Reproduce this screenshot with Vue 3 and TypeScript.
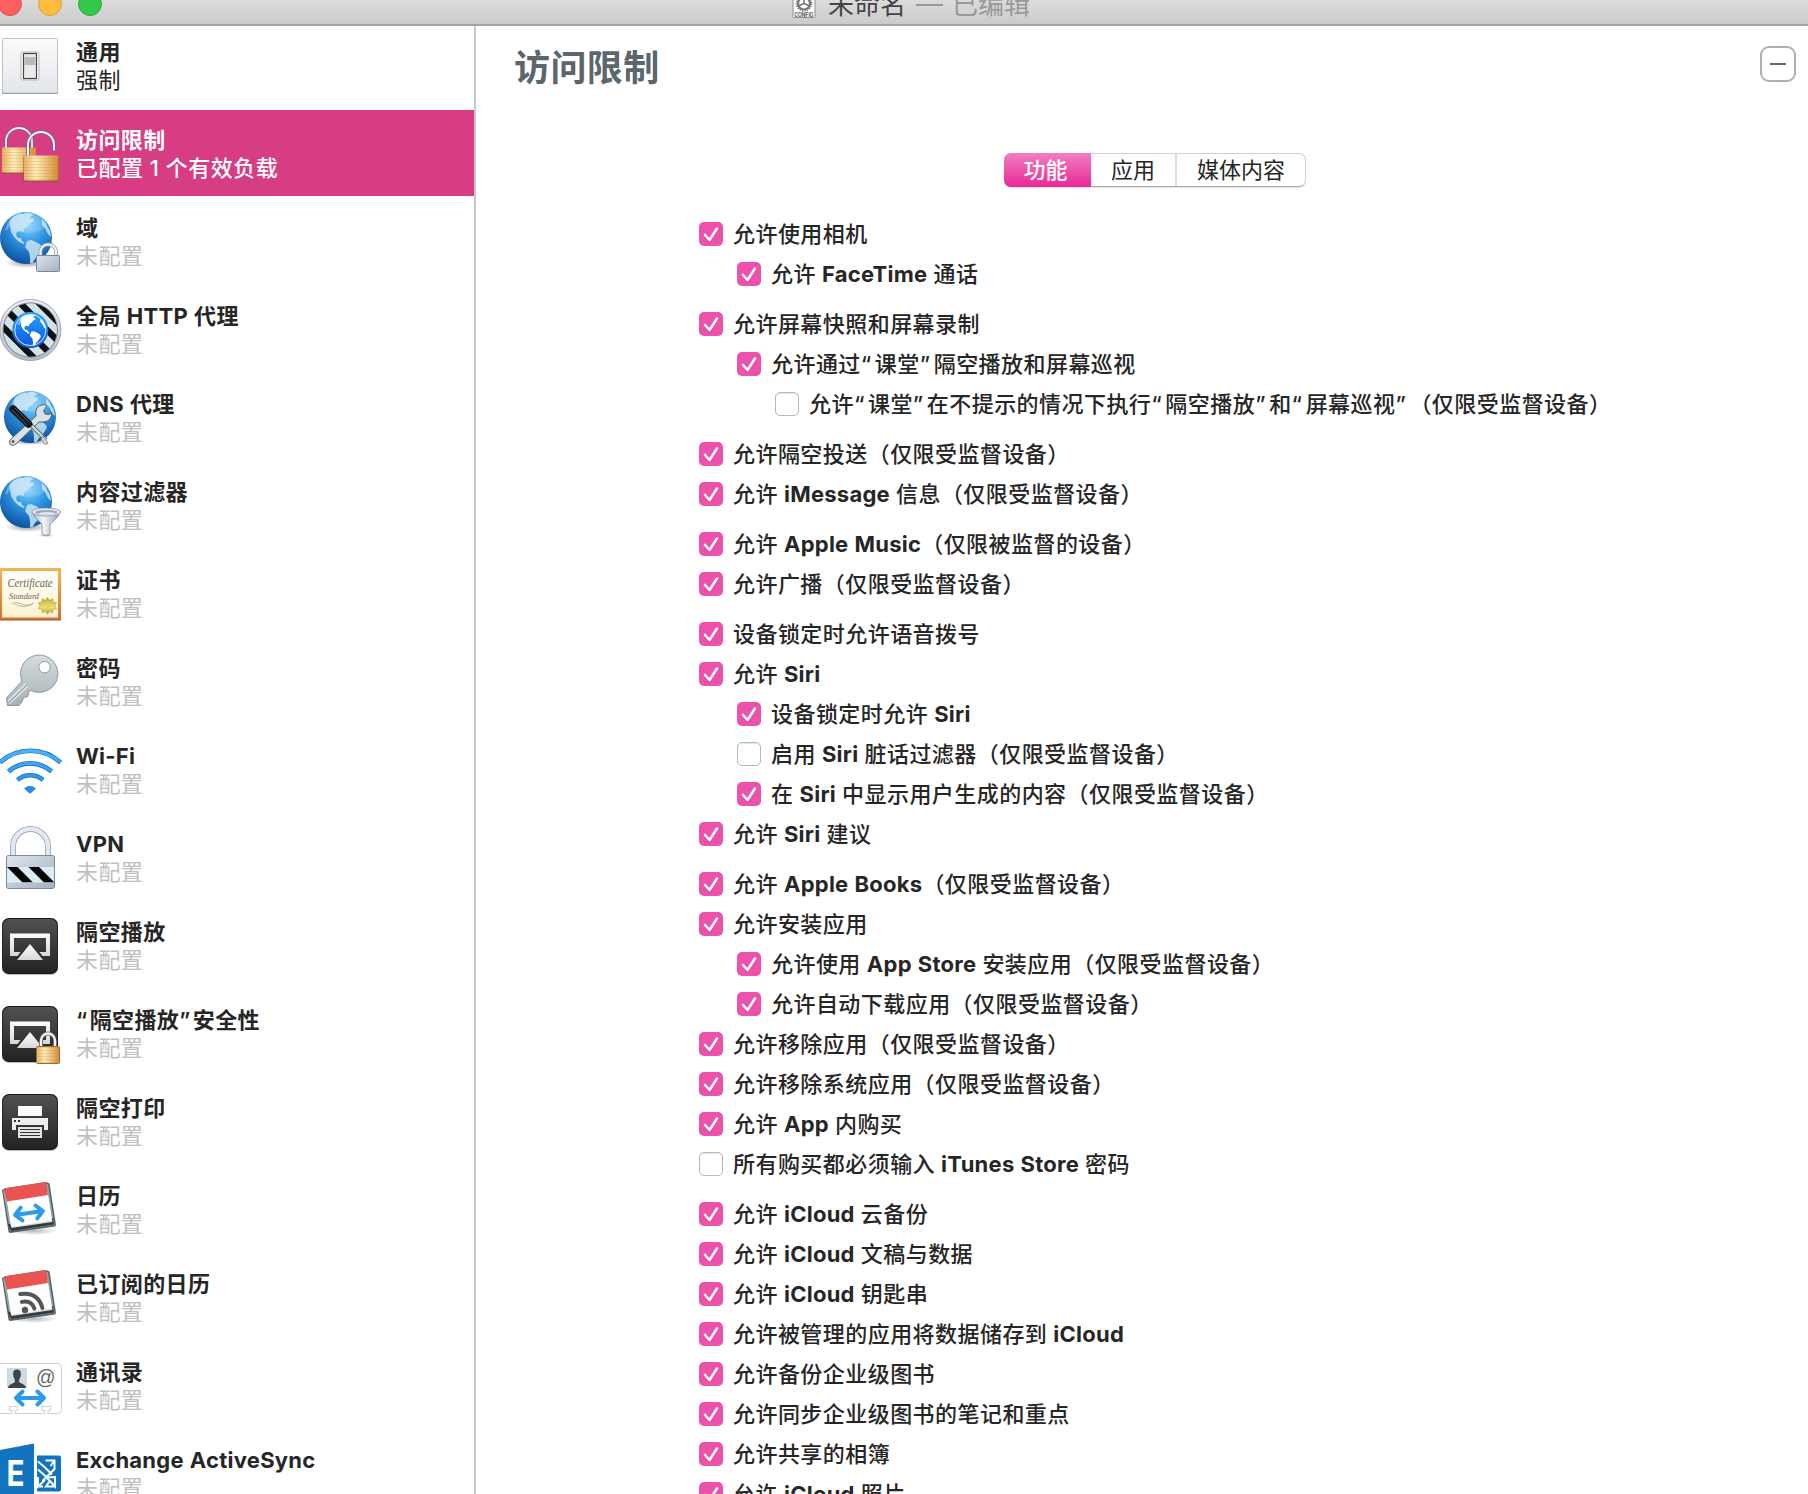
<script setup lang="ts">
interface Payload {
  icon: string
  title: string
  note: string
}

interface Option {
  label: string
  level?: number
  off?: boolean
}

interface Run {
  kind: 'latin' | 'quote' | 'han'
  text: string
}

const unset = '未配置'

const payloads: Payload[] = [
  { icon: 'general', title: '通用', note: '强制' },
  { icon: 'restrictions', title: '访问限制', note: '已配置 1 个有效负载' },
  { icon: 'domains', title: '域', note: unset },
  { icon: 'proxy', title: '全局 HTTP 代理', note: unset },
  { icon: 'dns', title: 'DNS 代理', note: unset },
  { icon: 'filter', title: '内容过滤器', note: unset },
  { icon: 'certificate', title: '证书', note: unset },
  { icon: 'passcode', title: '密码', note: unset },
  { icon: 'wifi', title: 'Wi-Fi', note: unset },
  { icon: 'vpn', title: 'VPN', note: unset },
  { icon: 'airplay', title: '隔空播放', note: unset },
  { icon: 'airplay-lock', title: '“隔空播放”安全性', note: unset },
  { icon: 'airprint', title: '隔空打印', note: unset },
  { icon: 'calendar', title: '日历', note: unset },
  { icon: 'subscribed', title: '已订阅的日历', note: unset },
  { icon: 'contacts', title: '通讯录', note: unset },
  { icon: 'exchange', title: 'Exchange ActiveSync', note: unset },
]

const selected = 'restrictions'

const groups: Option[][] = [
  [
    { label: '允许使用相机' },
    { label: '允许 FaceTime 通话', level: 1 },
  ],
  [
    { label: '允许屏幕快照和屏幕录制' },
    { label: '允许通过“课堂”隔空播放和屏幕巡视', level: 1 },
    { label: '允许“课堂”在不提示的情况下执行“隔空播放”和“屏幕巡视”（仅限受监督设备）', level: 2, off: true },
  ],
  [
    { label: '允许隔空投送（仅限受监督设备）' },
    { label: '允许 iMessage 信息（仅限受监督设备）' },
  ],
  [
    { label: '允许 Apple Music（仅限被监督的设备）' },
    { label: '允许广播（仅限受监督设备）' },
  ],
  [
    { label: '设备锁定时允许语音拨号' },
    { label: '允许 Siri' },
    { label: '设备锁定时允许 Siri', level: 1 },
    { label: '启用 Siri 脏话过滤器（仅限受监督设备）', level: 1, off: true },
    { label: '在 Siri 中显示用户生成的内容（仅限受监督设备）', level: 1 },
    { label: '允许 Siri 建议' },
  ],
  [
    { label: '允许 Apple Books（仅限受监督设备）' },
    { label: '允许安装应用' },
    { label: '允许使用 App Store 安装应用（仅限受监督设备）', level: 1 },
    { label: '允许自动下载应用（仅限受监督设备）', level: 1 },
    { label: '允许移除应用（仅限受监督设备）' },
    { label: '允许移除系统应用（仅限受监督设备）' },
    { label: '允许 App 内购买' },
    { label: '所有购买都必须输入 iTunes Store 密码', off: true },
  ],
  [
    { label: '允许 iCloud 云备份' },
    { label: '允许 iCloud 文稿与数据' },
    { label: '允许 iCloud 钥匙串' },
    { label: '允许被管理的应用将数据储存到 iCloud' },
    { label: '允许备份企业级图书' },
    { label: '允许同步企业级图书的笔记和重点' },
    { label: '允许共享的相簿' },
    { label: '允许 iCloud 照片' },
  ],
]

// Latin words and curly quotes are spaced differently from Han characters.
function runs(text: string): Run[] {
  const parts = text.match(/[\x20-\x7e]+|[“”]|[^\x20-\x7e“”]+/g) ?? []
  return parts.map((part) => ({
    kind: /^[\x20-\x7e]/.test(part) ? 'latin' : /^[“”]/.test(part) ? 'quote' : 'han',
    text: part,
  }))
}
</script>

<template>
  <div class="window">
    <svg class="defs" width="0" height="0" aria-hidden="true">
      <defs>
        <linearGradient id="g-plate" x1="0" y1="0" x2="0" y2="1">
          <stop offset="0" stop-color="#fbfbfc" /><stop offset="1" stop-color="#e3e6ea" />
        </linearGradient>
        <linearGradient id="g-brass" x1="0" y1="0" x2="1" y2="0">
          <stop offset="0" stop-color="#e9b262" /><stop offset=".35" stop-color="#ffedb8" /><stop offset="1" stop-color="#d48a35" />
        </linearGradient>
        <pattern id="p-brush" width="4" height="3" patternUnits="userSpaceOnUse">
          <rect width="4" height="1" fill="#b8742a" opacity=".2" />
        </pattern>
        <linearGradient id="g-steel" x1="0" y1="0" x2="1" y2="1">
          <stop offset="0" stop-color="#dfe5ec" /><stop offset="1" stop-color="#a3b0c0" />
        </linearGradient>
        <radialGradient id="g-globe" cx=".55" cy=".25" r=".8">
          <stop offset="0" stop-color="#7fd3ff" /><stop offset=".45" stop-color="#2f93e0" /><stop offset="1" stop-color="#0a4a96" />
        </radialGradient>
        <linearGradient id="g-blue" x1="0" y1="0" x2="0" y2="1">
          <stop offset="0" stop-color="#25a4f7" /><stop offset="1" stop-color="#0a56e0" />
        </linearGradient>
        <linearGradient id="g-dark" x1="0" y1="0" x2="0" y2="1">
          <stop offset="0" stop-color="#515151" /><stop offset="1" stop-color="#232323" />
        </linearGradient>
        <linearGradient id="g-light" x1="0" y1="0" x2="0" y2="1">
          <stop offset="0" stop-color="#fdfdfd" /><stop offset="1" stop-color="#d6d8d8" />
        </linearGradient>
        <linearGradient id="g-ring" x1="0" y1="0" x2="0" y2="1">
          <stop offset="0" stop-color="#eceef4" /><stop offset="1" stop-color="#b4bac8" />
        </linearGradient>
        <linearGradient id="g-frame" x1="0" y1="0" x2="0" y2="1">
          <stop offset="0" stop-color="#f2b755" /><stop offset="1" stop-color="#d17331" />
        </linearGradient>
        <linearGradient id="g-paper" x1="0" y1="0" x2="0" y2="1">
          <stop offset="0" stop-color="#fffefa" /><stop offset="1" stop-color="#fdf2d0" />
        </linearGradient>
        <linearGradient id="g-seal" x1="0" y1="0" x2="0" y2="1">
          <stop offset="0" stop-color="#c3b02c" /><stop offset=".6" stop-color="#e8dd7c" /><stop offset="1" stop-color="#b5a322" />
        </linearGradient>
        <linearGradient id="g-key" x1="0" y1="0" x2="0" y2="1">
          <stop offset="0" stop-color="#d5dcde" /><stop offset="1" stop-color="#a6b1b5" />
        </linearGradient>
        <linearGradient id="g-wave" x1="0" y1="22" x2="0" y2="67" gradientUnits="userSpaceOnUse">
          <stop offset="0" stop-color="#4ab8fa" /><stop offset="1" stop-color="#1f86f5" />
        </linearGradient>
        <linearGradient id="g-funnel" x1="0" y1="0" x2="1" y2="0">
          <stop offset="0" stop-color="#a9b3c6" /><stop offset=".4" stop-color="#f4f6fa" /><stop offset="1" stop-color="#8d99b0" />
        </linearGradient>
        <radialGradient id="g-shadow">
          <stop offset="0" stop-color="#334" stop-opacity=".5" /><stop offset="1" stop-color="#334" stop-opacity="0" />
        </radialGradient>
        <clipPath id="c-globe"><circle cx="26" cy="26" r="26" /></clipPath>
        <clipPath id="c-proxy"><circle cx="30.3" cy="44" r="26.800" /></clipPath>
        <clipPath id="c-vpn"><rect x="7" y="53" width="47" height="15.5" /></clipPath>
      </defs>
      <symbol id="s-land" viewBox="0 0 52 52">
        <path d="M13 5 16 3l4-1.500 4 .5 1-1.500 5 .5 4 2-3 1-1 3 3-1 1 3-4 2-2 3-3 2-2 4-3-1-3 1-1 3 2 3 3 0 1 3 3 2-2 1-5-3-4-4-3-5-1-6 0-5z" />
        <path d="M27 29 31 28l5 2 5 3 2 3-2 4-3 4-3 3-3 5-2-1 0-6-1-5-4-5z" />
        <path d="M42 7 46 12l4 7 1 6-3-3-3-6-3-3z" />
        <path d="M8 11 11 6l2 1-3 6-3 5-2 0z" opacity=".5" />
      </symbol>
      <symbol id="s-globe" viewBox="0 0 52 52">
        <circle cx="26" cy="26" r="26" fill="url(#g-globe)" />
        <g clip-path="url(#c-globe)"><use href="#s-land" width="52" height="52" fill="#c9e6f5" opacity=".85" /></g>
        <ellipse cx="28" cy="11" rx="19" ry="10" fill="#fff" opacity=".16" />
      </symbol>
      <symbol id="s-airplay" viewBox="0 0 64 88">
        <rect x="2" y="16.500" width="56" height="56.500" rx="7" fill="#bbb" />
        <rect x="2" y="16" width="56" height="56" rx="7" fill="#1d1d1d" />
        <rect x="2.800" y="17" width="54.400" height="53.500" rx="6.500" fill="url(#g-dark)" />
        <path d="M10 31.500H50V54H42.500L39.500 50H46V36H14V50H20.500L17.500 54H10Z" fill="url(#g-light)" />
        <path d="M30 42 43 58H17Z" fill="url(#g-light)" />
      </symbol>
      <symbol id="s-calendar" viewBox="0 0 64 88">
        <ellipse cx="33" cy="65" rx="25" ry="4" fill="url(#g-shadow)" opacity=".7" />
        <path d="M2 24 6 22 46 16 49.500 17.500 56 59 55 60.500 10 67 8.500 66Z" fill="#52616a" />
        <path d="M3 25 48 18 54.500 59 10 65Z" fill="#93a0a6" />
        <path d="M8 58 53 52 54 58.500 11 65Z" fill="#35393a" />
        <path d="M6.500 32 47.500 26 52.500 56 11.500 62Z" fill="#d9dad8" />
        <path d="M6.500 32 47.500 26 52 54.500 11 61Z" fill="#fdfdfd" />
        <path d="M4 22.500 46 16 48 29 7 35.500Z" fill="#e95351" />
      </symbol>
      <symbol id="s-arrows" viewBox="0 0 34 18">
        <path d="M3 9H31M9.500 2.500 3 9l6.500 6.500M24.500 2.500 31 9l-6.500 6.500" fill="none" stroke="#2e9bea" stroke-width="4" stroke-linecap="round" stroke-linejoin="round" />
      </symbol>
    </svg>

    <header class="titlebar">
      <div class="lights">
        <i class="light close"></i>
        <i class="light minimize"></i>
        <i class="light zoom"></i>
      </div>
      <div class="document">
        <svg class="file" width="24" height="30" viewBox="0 0 24 30">
          <rect x="1" y="-2" width="22" height="29.500" rx="1" fill="#fff" stroke="#8f8f8f" stroke-width="1" />
          <circle cx="12" cy="13.500" r="6" fill="none" stroke="#777" stroke-width="2.200" />
          <circle cx="12" cy="13.500" r="7.500" fill="none" stroke="#777" stroke-width="1.600" stroke-dasharray="1.300 1.200" />
          <path d="M12 13.500V8M12 13.500 6.500 16M12 13.500 17.500 16" stroke="#777" stroke-width="1.500" />
          <text x="2.500" y="26.500" font-size="5.600" font-weight="700" fill="#555" textLength="19" lengthAdjust="spacingAndGlyphs">CONFIG</text>
        </svg>
        <span class="name">未命名</span>
        <span class="edited"><i class="dash"></i>已编辑</span>
      </div>
    </header>

    <div class="body">
      <nav class="sidebar">
        <div v-for="item in payloads" :key="item.icon" class="payload" :class="{ active: item.icon === selected }">
          <svg class="icon" width="64" height="88" viewBox="0 0 64 88">
            <g v-if="item.icon === 'general'">
              <rect x="2" y="17" width="56" height="55" rx="1.500" fill="#7c8085" />
              <rect x="2.500" y="16.500" width="55" height="54.500" rx="1" fill="url(#g-plate)" stroke="#bfc2c6" />
              <rect x="21" y="30" width="18" height="28" rx="1.500" fill="#fff" stroke="#b4b8bc" />
              <rect x="23.500" y="31.500" width="13" height="25" fill="#e8eaeb" stroke="#444" stroke-width="1.200" />
              <rect x="24.500" y="35" width="11" height="8" fill="#b9bbbd" />
            </g>
            <g v-else-if="item.icon === 'restrictions'">
              <path d="M6 38V31A13 13 0 0 1 32 31V38" fill="none" stroke="#6b6388" stroke-width="3.200" />
              <path d="M6 38V31A13 13 0 0 1 32 31V38" fill="none" stroke="#e9ebf5" stroke-width="1.800" />
              <rect x="2" y="38" width="34" height="25.500" rx="1" fill="#8a5220" />
              <rect x="2" y="37.500" width="34" height="25" rx="1" fill="url(#g-brass)" />
              <rect x="2" y="37.500" width="34" height="25" fill="url(#p-brush)" />
              <path d="M28 46V35A13 13 0 0 1 54 35V41" fill="none" stroke="#6b6388" stroke-width="3.400" />
              <path d="M28 46V35A13 13 0 0 1 54 35V40.500" fill="none" stroke="#f1f2fa" stroke-width="2" />
              <rect x="23.500" y="46" width="35.500" height="25.500" rx="1" fill="#8a5220" />
              <rect x="24" y="45.500" width="34.500" height="25" rx="1" fill="url(#g-brass)" />
              <rect x="24" y="45.500" width="34.500" height="25" fill="url(#p-brush)" />
            </g>
            <g v-else-if="item.icon === 'domains'">
              <ellipse cx="27" cy="65" rx="22" ry="5" fill="url(#g-shadow)" />
              <use href="#s-globe" x="0" y="14" width="52" height="52" />
              <path d="M40.500 58V52.500A8 8 0 0 1 56 52.500V58" fill="none" stroke="#8b97a8" stroke-width="3.800" />
              <path d="M40.500 58V52.500A8 8 0 0 1 56 52.500V58" fill="none" stroke="#eef1f5" stroke-width="2.400" />
              <rect x="36.500" y="57.500" width="23" height="16" rx="1" fill="url(#g-steel)" stroke="#7b8797" />
            </g>
            <g v-else-if="item.icon === 'proxy'">
              <circle cx="30.300" cy="44" r="30.600" fill="url(#g-ring)" stroke="#8f96a8" stroke-width=".8" />
              <circle cx="30.300" cy="44" r="27.200" fill="#d3e2e6" stroke="#7c8496" />
              <g clip-path="url(#c-proxy)" stroke="#0d1112" stroke-width="6.400">
                <path d="M0 38 50 88M0 17.500 70 87.500M0 -3 80 77M10 -12 80 58" />
              </g>
              <circle cx="30.300" cy="44" r="18" fill="url(#g-blue)" />
              <circle cx="30.300" cy="44" r="15.600" fill="none" stroke="#d6ecff" stroke-width="1" />
              <use href="#s-land" x="14.500" y="28" width="32" height="32" fill="#fff" />
            </g>
            <g v-else-if="item.icon === 'dns'">
              <ellipse cx="30" cy="68" rx="21" ry="3" fill="url(#g-shadow)" />
              <use href="#s-globe" x="4" y="17" width="52" height="52" />
              <path d="M36 42Q34 31 44.500 30.500L47 32 43.500 36.500 45 40 49.500 40.500 51.500 38Q52.500 47 43.500 48L39 48 17 69Q13 73 10 70Q8 67 12 64Z" fill="#dbe2e4" stroke="#536067" stroke-width="1" />
              <circle cx="13" cy="67.500" r="1.500" fill="#536067" />
              <path d="M31 51 46 66" stroke="#5c6a70" stroke-width="4" />
              <path d="M31 51 46 66" stroke="#d5dcdf" stroke-width="2.200" />
              <path d="M43 62 48 69.500 45 70.500 41 65Z" fill="#cfd7da" stroke="#69757a" stroke-width=".7" />
              <path d="M13 35 28.500 50" stroke="#17191a" stroke-width="7.500" stroke-linecap="round" />
              <path d="M12 36 27 51M15 34 30 49" stroke="#5a5d60" stroke-width=".8" />
            </g>
            <g v-else-if="item.icon === 'filter'">
              <ellipse cx="27" cy="65" rx="22" ry="5" fill="url(#g-shadow)" />
              <use href="#s-globe" x="0" y="14" width="52" height="52" />
              <ellipse cx="46" cy="73.500" rx="8" ry="1.500" fill="url(#g-shadow)" />
              <path d="M32 50Q34 56 42 62V72Q46 75 50 72V62Q58 56 60.500 50Z" fill="url(#g-funnel)" stroke="#7d889e" stroke-width=".8" />
              <ellipse cx="46.200" cy="50" rx="14.300" ry="4" fill="#f3f5f9" stroke="#7d889e" stroke-width=".8" />
              <ellipse cx="46.200" cy="50.300" rx="11.500" ry="2.500" fill="#a1abbd" />
              <ellipse cx="47" cy="51.300" rx="8" ry="1.300" fill="#e4e8ef" />
            </g>
            <g v-else-if="item.icon === 'certificate'">
              <rect x="-2" y="18.500" width="63" height="52" fill="#a5581f" />
              <rect x="-2" y="18" width="63" height="51.500" fill="url(#g-frame)" />
              <rect x="2" y="21" width="56" height="46.500" fill="url(#g-paper)" />
              <text class="script" x="7.500" y="37" font-size="12" textLength="45" lengthAdjust="spacingAndGlyphs">Certificate</text>
              <text class="script" x="9" y="49" font-size="9" textLength="30" lengthAdjust="spacingAndGlyphs">Standard</text>
              <path d="M12 54Q15 51 20 53.500T30 55Q34 53 34 52M15 54Q22 59 33 54" fill="none" stroke="#a09c8c" stroke-width=".7" />
              <path d="M47.500 47.500l2 3 3.200-1.700.3 3.600 3.500.2-1.600 3.200 1.600 3-3.500.5-.3 3.500-3.200-1.500-2 3-2-3-3.200 1.500-.3-3.500-3.500-.5 1.600-3-1.600-3.200 3.500-.2.3-3.600 3.200 1.700z" fill="url(#g-seal)" stroke="#a08f1c" stroke-width=".5" />
            </g>
            <g v-else-if="item.icon === 'passcode'">
              <path fill-rule="evenodd" d="M22 43A18.700 18.700 0 1 1 31 52.500L28.500 54 28 58.500 23.500 59.500 22 64 19 67.500H7.500L6.500 60ZM44.500 23.500A5.700 5.700 0 1 0 44.600 23.500Z" fill="url(#g-key)" stroke="#8f999c" stroke-width="1" />
              <path d="M8 63 26 45.500M9 66 28 48" stroke="#dfe5e7" stroke-width="1.600" />
              <path d="M9 64.500 27 47" stroke="#8d989c" stroke-width=".9" />
            </g>
            <g v-else-if="item.icon === 'wifi'" fill="none">
              <g stroke="#1668b8" stroke-width="4.600">
                <path d="M0 36.500A45 45 0 0 1 60.500 36.500M8.500 45.500A32.500 32.500 0 0 1 51.500 45.500M17.500 54A19.500 19.500 0 0 1 43 54" />
              </g>
              <g stroke="url(#g-wave)" stroke-width="3.200">
                <path d="M0 36.500A45 45 0 0 1 60.500 36.500M8.500 45.500A32.500 32.500 0 0 1 51.500 45.500M17.500 54A19.500 19.500 0 0 1 43 54" />
              </g>
              <path d="M30 67.500 24.500 62.500Q30 58 35.500 62.500Z" fill="#1f8bfa" stroke="#1a6fd0" stroke-width=".6" />
            </g>
            <g v-else-if="item.icon === 'vpn'">
              <path d="M13 42V32.500A17.500 17.500 0 0 1 48 32.500V42" fill="none" stroke="#8e9aae" stroke-width="6" />
              <path d="M13 42V32.500A17.500 17.500 0 0 1 48 32.500V42" fill="none" stroke="#e3e7ef" stroke-width="4.600" />
              <rect x="6.500" y="41.500" width="48" height="33" rx="2" fill="url(#g-steel)" stroke="#7c889d" />
              <rect x="7" y="53" width="47" height="15.500" fill="#dcecf3" />
              <g clip-path="url(#c-vpn)" fill="#050505">
                <path d="M7 53H17.500L33 68.500H22.500Z" /><path d="M28.500 53H39L54.500 68.500H44Z" />
              </g>
            </g>
            <use v-else-if="item.icon === 'airplay'" href="#s-airplay" width="64" height="88" />
            <g v-else-if="item.icon === 'airplay-lock'">
              <use href="#s-airplay" width="64" height="88" />
              <path d="M41 57V50.500A7 7 0 0 1 55 50.500V57" fill="none" stroke="#555" stroke-width="4" />
              <path d="M41 57V50.500A7 7 0 0 1 55 50.500V57" fill="none" stroke="#f4f4f4" stroke-width="2.400" />
              <rect x="36.500" y="56.500" width="23" height="17" rx="1" fill="url(#g-brass)" stroke="#a66a2c" />
              <rect x="37" y="57" width="22" height="16" fill="url(#p-brush)" />
            </g>
            <g v-else-if="item.icon === 'airprint'">
              <rect x="2" y="16.500" width="56" height="56.500" rx="7" fill="#bbb" />
              <rect x="2" y="16" width="56" height="56" rx="7" fill="#1d1d1d" />
              <rect x="2.800" y="17" width="54.400" height="53.500" rx="6.500" fill="url(#g-dark)" />
              <rect x="18" y="28" width="24" height="10" fill="#fbfbfb" />
              <path d="M12 40H48V52H44V47H16V52H12Z" fill="#eceded" />
              <path d="M14 42h2v2h-2zM18 42h2v2h-2z" fill="#333" />
              <rect x="18" y="49" width="24" height="11" fill="#e3e4e4" />
              <path d="M20 51.500H40M20 54.500H40M20 57.500H40" stroke="#333" stroke-width="1" />
            </g>
            <g v-else-if="item.icon === 'calendar'">
              <use href="#s-calendar" width="64" height="88" />
              <use href="#s-arrows" x="12" y="38" width="34" height="18" transform="rotate(-8 29 47)" />
            </g>
            <g v-else-if="item.icon === 'subscribed'">
              <use href="#s-calendar" width="64" height="88" />
              <g transform="rotate(-8 25 56)" fill="none" stroke="#555" stroke-width="4" stroke-linecap="round">
                <circle cx="25" cy="56" r="3.200" fill="#555" stroke="none" />
                <path d="M23 47.500Q33 47 34.500 56M22.500 39.500Q40.500 39.500 42.500 56.500" />
              </g>
            </g>
            <g v-else-if="item.icon === 'contacts'">
              <path d="M-3 21.500H58Q61.500 21.500 61.500 25V67.500Q61.500 71.500 58 71.500H48V68.500H50.500V64.500H42V68.500H44.500V71.500H15V68.500H17.500V64.500H9.500V68.500H12V71.500H-3" fill="#fff" stroke="#cfcfcf" />
              <rect x="7" y="26" width="20" height="20" fill="#cddbe2" />
              <path d="M17 27.500C21 27.500 21 31 20.800 33 20.500 36 19 37 19 39.500 20 42 25.500 41.500 26 46H8C8.500 41.500 14 42 15 39.500 15 37 13.500 36 13.200 33 13 31 13 27.500 17 27.500Z" fill="#3f4446" />
              <text x="36" y="42" font-size="20" fill="#666" class="at" textLength="19.500" lengthAdjust="spacingAndGlyphs">@</text>
              <use href="#s-arrows" x="13" y="47" width="34" height="18" />
            </g>
            <g v-else>
              <path d="M0 20 34 13.500V74.500L0 68Z" fill="#1274bf" />
              <path d="M37 25.500H59Q61 25.500 61 27.500V59.500Q61 61.500 59 61.500H37Z" fill="#1274bf" />
              <text x="6.500" y="56" font-size="36" font-weight="700" fill="#fff" textLength="18" lengthAdjust="spacingAndGlyphs">E</text>
              <g fill="none" stroke="#fff" stroke-width="2">
                <path d="M45.500 30.500H54.500V39L42.500 51M54.500 30.500 50.500 36M38 31.500 45 37.500 52 44.500M38 39.500 47 47.500 55 47V56.500L47 48M55 56.500H46L49 52M38 47V56.500L45 50M38 56.500H43" />
              </g>
            </g>
          </svg>
          <div class="caption">
            <div class="title"><span v-for="(run, i) in runs(item.title)" :key="i" :class="run.kind">{{ run.text }}</span></div>
            <div class="note">{{ item.note }}</div>
          </div>
        </div>
      </nav>

      <main class="panel">
        <div class="heading">
          <h1>访问限制</h1>
          <button class="remove" type="button" aria-label="移除"><i></i></button>
        </div>

        <div class="tabs">
          <span class="tab current">功能</span>
          <span class="tab">应用</span>
          <span class="tab last">媒体内容</span>
        </div>

        <div class="options">
          <div v-for="(group, g) in groups" :key="g" class="group">
            <div v-for="option in group" :key="option.label" class="option" :class="`level-${option.level ?? 0}`">
              <span class="box" :class="{ off: option.off }">
                <svg v-if="!option.off" width="24" height="24" viewBox="0 0 24 24">
                  <path class="under" d="M6 14 10.500 19 18 7.500" />
                  <path d="M6 13 10.500 18 18 6.500" />
                </svg>
              </span>
              <span class="label"><span v-for="(run, i) in runs(option.label)" :key="i" :class="run.kind">{{ run.text }}</span></span>
            </div>
          </div>
        </div>
      </main>
    </div>
  </div>
</template>

<style>
body {
  margin: 0;
  background: #fff;
}
</style>

<style scoped>
.window {
  display: flex;
  flex-direction: column;
  width: 1808px;
  height: 1494px;
  overflow: hidden;
  background: #fff;
  color: #262626;
  font-family: Inter, "Noto Sans CJK SC", sans-serif;
  font-size: 22px;
  text-spacing-trim: space-all;
}

.defs {
  position: absolute;
}

.titlebar {
  position: relative;
  z-index: 1;
  flex: none;
  box-sizing: border-box;
  height: 26px;
  border-bottom: 2px solid #a3a3a3;
  background: linear-gradient(#dcdcdc, #cbcbcb);
}

.lights {
  display: flex;
  gap: 16px;
  margin: -8px 0 0 -2px;
}

.light {
  box-sizing: border-box;
  width: 24px;
  height: 24px;
  border: 1px solid;
  border-radius: 50%;
}

.close { background: #fc605c; border-color: #e2514d; }
.minimize { background: #fdbc40; border-color: #dfa03a; }
.zoom { background: #34c84a; border-color: #2aae3a; }

.document {
  display: flex;
  align-items: flex-start;
  height: 30px;
  margin: -25px 0 0 792px;
  font-size: 26px;
  line-height: 28px;
}

.file {
  flex: none;
  margin-top: -1px;
}

.name {
  margin-left: 12px;
  color: #454545;
}

.edited {
  display: flex;
  align-items: center;
  margin-left: 10px;
  color: #999;
}

.dash {
  width: 27px;
  height: 2px;
  margin-right: 9px;
  background: #999;
}

.body {
  display: flex;
  flex: 1;
  min-height: 0;
}

.sidebar {
  flex: none;
  width: 474px;
  margin-top: -4px;
  border-right: 2px solid #c8c8c8;
}

.payload {
  display: flex;
  height: 86px;
  margin-bottom: 2px;
}

.payload.active {
  background: #d63d83;
  color: #fff;
}

.icon {
  flex: none;
  overflow: visible;
}

.script {
  font-family: "Liberation Serif", serif;
  font-style: italic;
  fill: #6a665c;
}

.at {
  font-family: "Liberation Sans", sans-serif;
}

.caption {
  padding: 16px 0 0 12px;
  line-height: 28px;
  white-space: pre;
}

.title {
  height: 28px;
  font-weight: 600;
  letter-spacing: .4px;
}

.note {
  height: 28px;
  color: #bfbfbf;
  letter-spacing: .4px;
}

.payload:first-child .note {
  color: #262626;
}

.active .note {
  color: #fff;
  font-weight: 500;
  letter-spacing: .5px;
}

.latin {
  font-weight: 700;
  letter-spacing: .25px;
  word-spacing: .6px;
}

.quote {
  letter-spacing: 3.600px;
}

.title .quote {
  letter-spacing: 2.500px;
}

.panel {
  flex: 1;
  min-width: 0;
}

.heading {
  display: flex;
  justify-content: space-between;
  align-items: flex-start;
  height: 127px;
  padding: 0 12px 0 38px;
}

h1 {
  margin: 15px 0 0;
  color: #5c666d;
  font-size: 36px;
  font-weight: 600;
  letter-spacing: .4px;
  line-height: 54px;
}

.remove {
  display: flex;
  align-items: center;
  justify-content: center;
  width: 36px;
  height: 36px;
  margin-top: 20px;
  padding: 0;
  border: 2px solid #b0b0b0;
  border-radius: 9px;
  background: #fff;
}

.remove i {
  width: 16px;
  height: 2px;
  background: #666;
}

.tabs {
  display: flex;
  box-sizing: border-box;
  width: 302px;
  height: 34px;
  margin-left: 528px;
  border: 1px solid #d0d0d0;
  border-bottom-color: #adadad;
  border-radius: 7px;
  box-shadow: 0 1px 1px rgba(0, 0, 0, .12);
  line-height: 32px;
  text-align: center;
}

.tab {
  box-sizing: border-box;
  width: 84px;
}

.tab.last {
  flex: 1;
  border-left: 2px solid #dcdcdc;
}

.tab.current {
  width: 87px;
  height: 34px;
  margin: -1px 0 -1px -1px;
  padding-right: 4px;
  border-radius: 7px 0 0 7px;
  background: linear-gradient(#ef7fc1, #ea2898);
  color: #fff;
  font-weight: 500;
  line-height: 34px;
}

.options {
  padding: 27px 0 0 223px;
}

.group {
  margin-bottom: 10px;
}

.option {
  display: flex;
  align-items: center;
  height: 40px;
}

.level-1 { padding-left: 38px; }
.level-2 { padding-left: 76px; }

.box {
  flex: none;
  box-sizing: border-box;
  width: 24px;
  height: 24px;
  border-radius: 5px;
  background: #ec52ab;
}

.box.off {
  border: 1px solid #b9b9b9;
  background: #fff;
  box-shadow: inset 0 1px 1px rgba(0, 0, 0, .1);
}

.box svg {
  display: block;
  fill: none;
  stroke: #fff;
  stroke-width: 2.600;
  stroke-linecap: round;
  stroke-linejoin: round;
}

.box .under {
  stroke: #c93a8c;
  opacity: .6;
}

.label {
  margin-left: 10px;
  font-weight: 500;
  letter-spacing: .45px;
  line-height: 40px;
  white-space: pre;
}
</style>
